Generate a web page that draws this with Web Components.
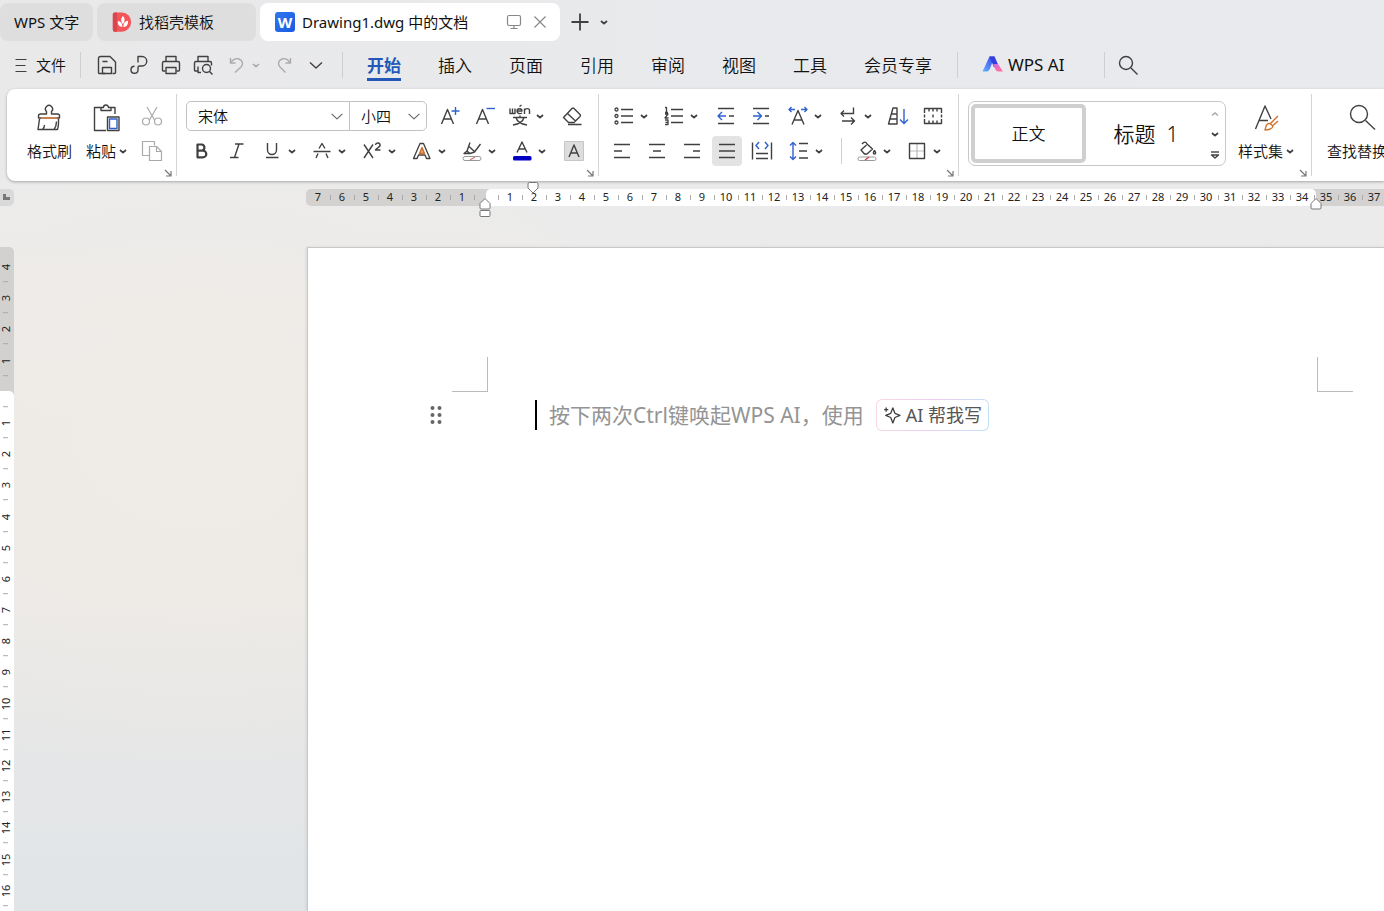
<!DOCTYPE html>
<html lang="zh-CN">
<head>
<meta charset="utf-8">
<title>Drawing1.dwg 中的文档 - WPS 文字</title>
<style>
html, body { margin: 0; height: 100%; overflow: hidden; }
body {
  font-family: "Noto Sans", "Noto Sans CJK SC", sans-serif;
  font-size: 15px;
  line-height: 20px;
  font-weight: 350;
  color: #111;
}
</style>
</head>
<body>
<wps-app></wps-app>
<script>
const caret = '<path d="M9 11l3 2.600 3-2.600" stroke-width="1.800"/>';
const ICONS = {
  menu: '<path d="M6.500 6.500h11M6.500 12.500h10M6.500 18.500h11" stroke-width="1.200"/>',
  caret,
  chevron: '<path d="M6 9.500l6 5.500 6-5.500"/>',
  chevronS: '<path d="M5.500 9.500l6.500 6 6.500-6" stroke="#666"/>',
  save: '<path d="M10 20.500H4.500a1 1 0 0 1-1-1V5.500a2 2 0 0 1 2-2h9.500l5.500 5.500v10.500a1 1 0 0 1-1 1h-2M7.500 8.500h5"/><path d="M7.500 20.500v-6h9v6z"/>',
  share: '<path d="M11 9.500V3.500h4a4.700 4.700 0 0 1 0 9.500h-2.500a1.500 1.500 0 0 0-1.500 1.500v2.500a3.500 3.500 0 1 1-3.500-3.700"/>',
  print: '<path d="M7 8.500v-5h10v5M6.500 18H4.500a1 1 0 0 1-1-1v-7a1.500 1.500 0 0 1 1.500-1.500h14a1.500 1.500 0 0 1 1.500 1.500v7a1 1 0 0 1-1 1h-2"/><path d="M7 14.500h10v6H7z"/>',
  preview: '<path d="M7 8.500v-5h10v5M6.500 18H4.500a1 1 0 0 1-1-1v-7a1.500 1.500 0 0 1 1.500-1.500h14a1.500 1.500 0 0 1 1.500 1.500v2.500M7 13.500v6h3"/><circle cx="15.500" cy="15.500" r="4"/><path d="M18.500 18.500l3 3"/>',
  undo: '<g stroke="#aaa"><path d="M5.500 5v5h5"/><path d="M6 9.500c2-3 5-4.500 8-3.500 4 1.500 4.500 5.500 2 8l-6 5.500"/></g>',
  redo: '<g stroke="#aaa"><path d="M18.500 5v5h-5"/><path d="M18 9.500c-2-3-5-4.500-8-3.500-4 1.500-4.500 5.500-2 8l5.500 5.500"/></g>',
  caretL: '<path d="M9 11l3 2.600 3-2.600" stroke="#aaa" stroke-width="1.600"/>',
  search: '<circle cx="10" cy="10" r="6.500"/><path d="M15 15l6.500 6.500"/>',
  ai: '<g stroke="none"><path d="M8.500 3.500h5L9 15.500c-.9 2-1.800 3-3.500 3H1.500z" fill="url(#b)"/><path d="M8.500 3.500h5l3.500 8-4 3z" fill="#3340e0"/><path d="M12 11h5l5 7.500h-4.500c-1.600 0-2.500-.7-3-2z" fill="url(#r)"/></g><defs><linearGradient id="b" x1="1" y1="0" x2="0" y2="1"><stop stop-color="#3a3ee6"/><stop offset="1" stop-color="#62b4ff"/></linearGradient><linearGradient id="r" x1="0" y1="0" x2="1" y2="1"><stop stop-color="#c06cf0"/><stop offset=".5" stop-color="#f46cb4"/><stop offset="1" stop-color="#ff7896"/></linearGradient></defs>',
  docer: '<path d="M4 1.500h8a10 10.500 0 0 1 0 21H4a2 2 0 0 1-2-2v-17a2 2 0 0 1 2-2z" fill="#f35558" stroke="none"/><path d="M4 1.500h2.500v21H4a2 2 0 0 1-2-2v-17a2 2 0 0 1 2-2z" fill="#d8474d" stroke="none"/><path d="M13 5.500c2.500 2.500 2.500 6 0 9-2.500-3-2.500-6.500 0-9zM7.500 11c3 .2 4.800 2 4.800 6.500-3.800-.5-5.300-3-4.800-6.500zM18.500 10.500c.5 4-1.500 6.500-5 7 0-4.500 1.800-6.800 5-7z" fill="#fff" stroke="none"/>',
  screen: '<g stroke="#888" stroke-width="1.200"><rect x="5.500" y="5.500" width="13" height="10" rx="1.500"/><path d="M12 15.500v3M8.500 18.500h7"/></g>',
  close: '<path d="M6.500 6.500l11 11M17.500 6.500l-11 11" stroke="#888" stroke-width="1.200"/>',
  plus: '<path d="M12 3.500v17M3.500 12h17" stroke-width="1.800"/>',
  cut: '<g stroke="#aaa" stroke-width="1.200"><path d="M7 3l7.500 13M17 3L9.500 16"/><circle cx="6" cy="17.500" r="3.500"/><circle cx="18" cy="17.500" r="3.500"/></g>',
  copy: '<g stroke="#aaa" stroke-width="1.200"><path d="M9 16.500H2.500v-14h12v4"/><path d="M9.500 7.500h7l5 5v9h-12z"/><path d="M16.500 7.500v5h5"/></g>',
  launcher: '<path d="M9 9l5.500 5.500M15 10v5h-5" stroke="#777" stroke-width="1.200"/>',
  grow: '<path d="M3.500 20L9.500 5.500 15.500 20M5.500 15h8"/><path d="M17.500 3v8M13.500 7h8" stroke="#2f62d0"/>',
  shrink: '<path d="M3.500 20L9.500 5.500 15.500 20M5.500 15h8"/><path d="M13.500 4.500h8.500" stroke="#2f62d0"/>',
  pinyin: '<g stroke-width="1.400"><path d="M2 4.500v5h5v-5M4.500 4.500v5M9 7h5c0-3-5-3-5 0 0 3 3.500 3 5 2M11.500 2.500l2-1.500M16.500 10V4.500M16.500 6.500c1-2.500 5-2.500 5 0V10"/><path d="M12 11.500v2M5 13.500h14M8 13.500c1 4 5 6.500 11 7.500M16 13.500c-1 4-5 6.500-11 7.500"/></g>',
  eraser: '<path d="M3.500 13.500l8.500-9a1.500 1.500 0 0 1 2 0l6 6a1.500 1.500 0 0 1 0 2L14 18.500H8.500zM7.500 9.500l8 7.500M8 20.500h13.500"/>',
  bold: '<path d="M7.500 5.500h4.500a3.200 3.200 0 0 1 0 6.200h-4.500zM7.500 11.700h5.500a3.300 3.300 0 0 1 0 6.600h-5.500z" stroke-width="2.200"/>',
  italic: '<path d="M10 5h8.500M5 18.500h8.500M14 5l-4.500 13.500"/>',
  underline: '<path d="M7.500 4v7a4.500 4.500 0 0 0 9 0V4M6 18.500h12.500"/>',
  strike: '<path d="M9 9.500L12 4.500l3 5M3.500 12.500h17M8 14.500l-2 4.500M16 14.500l2 4.500"/>',
  sup: '<path d="M4 5.500L13 19M13 5.500L4 19"/><path d="M15.500 6c.5-3 5-2.500 4.500.5-.3 1.500-3 2.500-4.500 4.500h5" stroke-width="1.500"/>',
  outline: '<path d="M3.500 19.500L10 4.500h3.500l6.500 15h-3.500l-1.500-3.500H8.500L7 19.500z" stroke-width="1.300"/><path d="M9.500 14.500L12 8.500l2.500 6z" stroke="#c96f2c" fill="#e9a46f"/>',
  marker: '<path d="M10 3.500L7 12l3 2.500 4.500-1.500L20.500 5M9 7.500l5.500 5M4 14.500l3-2.500 2.500 2.500z"/><rect x="3" y="17.500" width="18" height="4" rx="2" stroke="#999" stroke-width="1"/><path d="M10 21l5-3" stroke="#d77"/>',
  color: '<path d="M7 13.500L12 3l5 10.500M9 10h6"/><rect x="3" y="17" width="18.500" height="4.500" rx="1.500" fill="#0000c4" stroke="none"/>',
  shade: '<rect x="2.500" y="2.500" width="19" height="19" fill="#ddd" stroke="#c6c6c6" stroke-width="1"/><path d="M7 18L12 6l5 12M8.500 14h7"/>',
  bullets: '<g stroke-width="1.300"><circle cx="4.500" cy="5.500" r="1.500"/><circle cx="4.500" cy="12" r="1.500"/><circle cx="4.500" cy="18.500" r="1.500"/></g><path d="M9 5.500h12M9 12h12M9 18.500h12"/>',
  numbers: '<g stroke-width="1.300"><path d="M3 3.500h1.500v5M3 8.500h3M3 10h3l-3 4h3.500M3 16h3v4.500H3M3.500 18.300H6"/></g><path d="M9 5.500h12M9 12h12M9 18.500h12"/>',
  outdent: '<path d="M4 4.500h16M4 19.500h16M15 12h5"/><path d="M12 12H4.500M8 8l-4 4 4 4" stroke="#2f62d0"/>',
  indent: '<path d="M4 4.500h16M4 19.500h16M16 12h4"/><path d="M4 12h8M8.500 8l4 4-4 4" stroke="#2f62d0"/>',
  scaleA: '<path d="M6 20.500L12 6.500l6 14M8 16h8"/><path d="M9 5.500H3M5.500 3L3 5.500 5.500 8M15 5.500h6M18.500 3L21 5.500 18.500 8" stroke="#2f62d0"/>',
  wrap: '<path d="M17.500 3.500v6H5M8 6.500l-3 3 3 3M6 17h12.500M15 13.500l3.500 3.500-3.500 3.500"/>',
  sort: '<path d="M7 4h4v16H2.500zM6 10h5M4.500 15h6.500"/><path d="M18 5v14M14 15.500l4 4 4-4" stroke="#2f62d0"/>',
  frames: '<path d="M3.500 9V4.500h17V9M3.500 15v4.500h17V15M8 4.500v3M12 4.500v3M16 4.500v3M8 19.500v-3M12 19.500v-3M16 19.500v-3M12 10.500v3M3.500 10.500v3M20.500 10.500v3" stroke-width="1.400"/>',
  left: '<path d="M4 5.500h16M4 12h8M4 18.500h16"/>',
  center: '<path d="M4 5.500h16M8 12h8M4 18.500h16"/>',
  right: '<path d="M4 5.500h16M13 12h7M4 18.500h16"/>',
  justify: '<path d="M4 5.500h16M4 12h16M4 18.500h16"/>',
  distribute: '<path d="M2.500 3.500v17M21.500 3.500v17M6 14.500h12M6 19.500h12"/><path d="M9 3L6 6.500 9 10M15 3l3 3.500-3 3.500" stroke="#2f62d0"/>',
  spacing: '<path d="M12 4.500h9M12 12h8M12 19h9"/><path d="M6 3.500v17M3 6.500l3-3 3 3M3 17.500l3 3 3-3" stroke="#2f62d0"/>',
  fill: '<path d="M7 5c2-2.500 4-2.500 5 0l5.500 5-5.500 5H9.500L6 11l5.500-5M19.500 11.500c-1.500 2-1.500 3.500 0 3.500s1.500-1.500 0-3.500"/><rect x="3" y="18" width="18" height="3.500" rx="1.500" stroke="#999" stroke-width="1"/><path d="M10 21l4-3" stroke="#c44"/>',
  border: '<path d="M12 5v14M5 12h14" stroke="#bbb" stroke-width="1.200"/><path d="M4.500 4.500h15v15h-15z"/>',
  painter: '<path d="M13.500 13V10.500a3.500 3.500 0 1 1 5 0V13h6a2 2 0 0 1 2 2v2H5.500v-2a2 2 0 0 1 2-2z"/><path d="M6.500 18L5 28.500h16c2-2.500 2.500-5.500 2.500-8M25.500 18v4c0 3-.5 5-1 6.500H21M9.500 28.500c1.500-1.500 2-3 2-4.500"/><path d="M8 17h16" stroke="#ec8a4a"/>',
  paste: '<path d="M12 6.500H5.500v23H17M22 6.500h4V13M12 6.500v3h10v-3h-2.500a2.500 2.500 0 0 0-5 0z"/><path d="M18.500 16h11.500v13.500H18.500z"/><path d="M20.500 18h7.500v9.500h-7.500z" stroke="#2f62d0"/>',
  styleSet: '<path d="M6.500 28L16 5l6 13M10 19.500h9"/><g stroke="#d0722e"><path d="M29 15l-8 8M29 20l-5 4.500"/><path d="M21 22.500c-3.500-.5-4 2-5 6.500 4 0 7.500-1 8-4z"/></g>',
  find: '<circle cx="14" cy="13" r="8.500"/><path d="M20.500 19.500l9.500 9"/>',
  spark: '<path d="M13 3.500l2.500 6.500 6 2.500-6 2.500-2.500 6.500-2.500-6.500-6-2.500 6-2.500zM5 3v5M2.500 5.500h5" stroke-width="1.600"/>',
  grip: '<g fill="#666" stroke="none"><circle cx="8.500" cy="5" r="2"/><circle cx="15.500" cy="5" r="2"/><circle cx="8.500" cy="12" r="2"/><circle cx="15.500" cy="12" r="2"/><circle cx="8.500" cy="19" r="2"/><circle cx="15.500" cy="19" r="2"/></g>',
  more: '<path d="M8 10h8"/><path d="M8.500 13l3.500 3 3.500-3z"/>',
  up: '<path d="M9 13.500l3-2.600 3 2.600" stroke="#aaa"/>'
};
const BIG = new Set(['painter', 'paste', 'styleSet', 'find']);
const BASE = '*{box-sizing:border-box}button{font:inherit;color:inherit;background:none;border:0;padding:0;margin:0;cursor:default;display:flex;align-items:center;justify-content:center;white-space:nowrap}';

function define(name, render) {
  customElements.define(name, class extends HTMLElement {
    connectedCallback() {
      if (this.shadowRoot) return;
      const t = document.createElement('template');
      t.innerHTML = '<style>' + BASE + '</style>' + render(this);
      this.attachShadow({ mode: 'open' }).append(t.content.cloneNode(true));
    }
  });
}

define('wps-icon', el => {
  const name = el.getAttribute('name');
  const box = BIG.has(name) ? 34 : 24;
  return `<style>:host{display:block;flex:none;width:var(--icon,${box}px);height:var(--icon,${box}px)}svg{display:block;width:100%;height:100%}</style>
  <svg viewBox="0 0 ${box} ${box}" fill="none" stroke="#404040" stroke-width="1.400" stroke-linejoin="round" aria-hidden="true">${ICONS[name]}</svg>`;
});

define('wps-sep', () => '<style>:host{display:block;flex:none;width:1px;height:26px;background:#cfcfd1}</style>');

/* Ribbon tool: an icon, with a drop-down arrow when "menu" is set */
define('wps-tool', el => {
  const menu = el.hasAttribute('menu');
  return `<style>
  :host{display:flex;flex:none;width:${menu ? 50 : 35}px;height:35px;align-items:center;justify-content:${menu ? 'flex-start' : 'center'}}
  button{height:30px;border-radius:4px;${menu ? 'width:50px;justify-content:flex-start;padding-left:6px' : 'width:30px'}}
  :host([pressed]) button{background:#e3e3e3}
  .c{margin-left:-4px}
  </style><button type="button" aria-label="${el.getAttribute('label')}"${el.hasAttribute('pressed') ? ' aria-pressed="true"' : ''}><wps-icon name="${el.getAttribute('icon')}"></wps-icon>${menu ? '<wps-icon class="c" name="caret"></wps-icon>' : ''}</button>`;
});

/* Tall tool with a caption under its icon */
define('wps-big-tool', el => `<style>
  :host{display:block;flex:none}
  button{flex-direction:column;height:70px;justify-content:flex-start;padding-top:3px;gap:4px}
  span{display:flex;height:24px;align-items:center}
  .c{margin-right:-9px;margin-left:-5px}
  </style><button type="button"><wps-icon name="${el.getAttribute('icon')}"></wps-icon><span><slot></slot>${el.hasAttribute('menu') ? '<wps-icon class="c" name="caret"></wps-icon>' : ''}</span></button>`);

define('wps-group', el => `<style>
  :host{display:flex;flex:none;position:relative;height:82px;margin-top:5px;padding-top:4px;border-right:1px solid #d4d4d4}
  :host([last]){border:0}
  button{position:absolute;right:2px;bottom:-3px;width:12px;height:12px}
  </style><slot></slot>${el.hasAttribute('last') ? '' : '<button type="button" aria-label="更多设置"><wps-icon name="launcher"></wps-icon></button>'}`);

define('wps-combo', el => `<style>
  :host{display:grid;height:30px;align-items:center;border:1px solid #c2c2c2}
  select,wps-icon{grid-area:1/1}
  select{appearance:none;border:0;background:none;font:inherit;color:inherit;height:28px;padding:0 24px 0 11px;width:100%}
  wps-icon{justify-self:end;pointer-events:none;--icon:20px;margin-right:2px}
  </style><select aria-label="${el.getAttribute('label')}"><option>${el.getAttribute('value')}</option></select><wps-icon name="chevronS"></wps-icon>`);

define('wps-tab', () => `<style>
  :host{display:flex;flex:none;height:38px;align-items:center;border-radius:8px;background:#dededf}
  :host([active]){background:#fff}
  </style><slot></slot>`);

define('wps-tabbar', () => `<style>
  :host{display:flex;height:44px;padding-top:3px;gap:4px}
  .home{width:93px;padding-left:14px;font-weight:400}
  .store{width:159px;padding-left:14px;gap:6px;--icon:22px}
  .doc{width:300px;padding-left:15px;font-weight:400}
  .logo{width:20px;height:20px;margin-right:7px;border-radius:3px;background:linear-gradient(135deg,#2f76f0,#1a5be0);color:#fff;font:700 15px/20px "Open Sans","Noto Sans",sans-serif;text-align:center}
  .name{flex:1}
  .close{margin:0 8px 0 2px}
  .add{display:flex;height:38px}
  .add button{width:24px;height:38px}
  .add .new{width:32px}
  .add .list{margin-left:-4px}
  </style>
  <wps-tab class="home"><button type="button">WPS 文字</button></wps-tab>
  <wps-tab class="store"><wps-icon name="docer"></wps-icon><button type="button">找稻壳模板</button></wps-tab>
  <wps-tab class="doc" active><span class="logo">W</span><span class="name">Drawing1.dwg 中的文档</span>
    <button type="button" aria-label="窗口"><wps-icon name="screen"></wps-icon></button>
    <button type="button" class="close" aria-label="关闭"><wps-icon name="close"></wps-icon></button></wps-tab>
  <div class="add"><button type="button" class="new" aria-label="新建"><wps-icon name="plus"></wps-icon></button><button type="button" class="list" aria-label="标签列表"><wps-icon name="caret"></wps-icon></button></div>`);

define('wps-menubar', () => `<style>
  :host{display:flex;height:45px;align-items:center;padding-bottom:3px}
  .file{padding-left:9px;gap:3px;margin-right:14px}
  .quick{display:flex;align-items:center;padding-left:10px}
  .quick button{width:32px;height:32px}
  .quick .undo{margin-left:2px}
  .quick .drop{width:12px;margin:0 8px 0 -3px}
  .quick .redo{margin-left:-2px}
  .quick .all{margin-right:10px}
  nav{display:flex;gap:37px;margin:0 25px 0 24px;font-size:17px;line-height:24px}
  nav button{padding:5px 0 0;border-bottom:3px solid transparent}
  nav .on{color:#2458b8;font-weight:700;border-color:#2458b8}
  .ai{font-size:17px;font-weight:400;margin:0 39px 0 23px;gap:3px}
  .find{margin-left:11px}
  </style>
  <button type="button" class="file"><wps-icon name="menu"></wps-icon>文件</button><wps-sep></wps-sep>
  <div class="quick">
    <button type="button" aria-label="保存"><wps-icon name="save"></wps-icon></button>
    <button type="button" aria-label="输出为PDF"><wps-icon name="share"></wps-icon></button>
    <button type="button" aria-label="打印"><wps-icon name="print"></wps-icon></button>
    <button type="button" aria-label="打印预览"><wps-icon name="preview"></wps-icon></button>
    <button type="button" class="undo" aria-label="撤销"><wps-icon name="undo"></wps-icon></button>
    <button type="button" class="drop" aria-label="撤销列表"><wps-icon name="caretL"></wps-icon></button>
    <button type="button" class="redo" aria-label="恢复"><wps-icon name="redo"></wps-icon></button>
    <button type="button" class="all" aria-label="自定义"><wps-icon name="chevron"></wps-icon></button>
  </div><wps-sep></wps-sep>
  <nav><button type="button" class="on">开始</button><button type="button">插入</button><button type="button">页面</button><button type="button">引用</button><button type="button">审阅</button><button type="button">视图</button><button type="button">工具</button><button type="button">会员专享</button></nav>
  <wps-sep></wps-sep>
  <button type="button" class="ai"><wps-icon name="ai"></wps-icon>WPS AI</button><wps-sep></wps-sep>
  <button type="button" class="find" aria-label="搜索"><wps-icon name="search"></wps-icon></button>`);

define('wps-ribbon', () => `<style>
  :host{display:flex;height:92px;margin-left:7px;background:#fff;border-radius:8px 0 0 8px;box-shadow:0 1px 3px rgba(0,0,0,.3);position:relative}
  .rows{display:flex;flex-direction:column}
  .row{display:flex;height:35px;align-items:center}
  .clip{width:170px;padding-left:20px}
  .clip .paste{margin-left:14px}
  .clip .rows{margin-left:8px}
  .font{width:422px;padding-left:7px}
  .combos{display:flex;margin:0 5px 0 2px}
  .face{width:164px;border-radius:5px 0 0 5px}
  .size{width:78px;border-radius:0 5px 5px 0;margin-left:-1px}
  .para{width:360px;padding-left:5px}
  .gap{margin-left:2px}
  wps-sep.in{margin:0 7px 0 10px}
  .styles{width:353px;padding-left:9px}
  .gallery{display:flex;width:258px;height:65px;margin-top:3px;padding:2px 0 2px 2px;border:1px solid #c8c8c8;border-radius:7px}
  .gallery button{flex:none;height:59px;font-size:17px;line-height:24px}
  .gallery .body{width:115px;border:4px solid #cfcfcf;border-radius:5px}
  .gallery .head{width:120px;font-size:21px;white-space:pre}
  .arrows{display:flex;flex-direction:column}
  .arrows button{width:18px;height:20px}
  .set{margin-left:12px}
  .find{padding-left:15px}
  </style>
  <wps-group class="clip">
    <wps-big-tool icon="painter">格式刷</wps-big-tool><wps-big-tool class="paste" icon="paste" menu>粘贴</wps-big-tool>
    <div class="rows"><wps-tool icon="cut" label="剪切"></wps-tool><wps-tool icon="copy" label="复制"></wps-tool></div>
  </wps-group>
  <wps-group class="font"><div class="rows">
    <div class="row"><div class="combos"><wps-combo class="face" label="字体" value="宋体"></wps-combo><wps-combo class="size" label="字号" value="小四"></wps-combo></div>
      <wps-tool icon="grow" label="增大字号"></wps-tool><wps-tool icon="shrink" label="减小字号"></wps-tool><wps-tool icon="pinyin" label="拼音指南" menu></wps-tool><wps-tool class="gap" icon="eraser" label="清除格式"></wps-tool></div>
    <div class="row"><wps-tool icon="bold" label="加粗"></wps-tool><wps-tool icon="italic" label="倾斜"></wps-tool><wps-tool icon="underline" label="下划线" menu></wps-tool><wps-tool icon="strike" label="删除线" menu></wps-tool><wps-tool icon="sup" label="上标" menu></wps-tool><wps-tool icon="outline" label="文字效果" menu></wps-tool><wps-tool icon="marker" label="突出显示" menu></wps-tool><wps-tool icon="color" label="字体颜色" menu></wps-tool><wps-tool class="gap" icon="shade" label="字符底纹"></wps-tool></div>
  </div></wps-group>
  <wps-group class="para"><div class="rows">
    <div class="row"><wps-tool class="gap" icon="bullets" label="项目符号" menu></wps-tool><wps-tool icon="numbers" label="编号" menu></wps-tool><wps-tool class="gap" icon="outdent" label="减少缩进量"></wps-tool><wps-tool icon="indent" label="增加缩进量"></wps-tool><wps-tool class="gap" icon="scaleA" label="中文版式" menu></wps-tool><wps-tool icon="wrap" label="换行" menu></wps-tool><wps-tool icon="sort" label="排序"></wps-tool><wps-tool icon="frames" label="制表位"></wps-tool></div>
    <div class="row"><wps-tool icon="left" label="左对齐"></wps-tool><wps-tool icon="center" label="居中对齐"></wps-tool><wps-tool icon="right" label="右对齐"></wps-tool><wps-tool icon="justify" label="两端对齐" pressed></wps-tool><wps-tool icon="distribute" label="分散对齐"></wps-tool><wps-tool class="gap" icon="spacing" label="行距" menu></wps-tool><wps-sep class="in"></wps-sep><wps-tool icon="fill" label="底纹颜色" menu></wps-tool><wps-tool icon="border" label="边框" menu></wps-tool></div>
  </div></wps-group>
  <wps-group class="styles">
    <div class="gallery"><button type="button" class="body">正文</button><button type="button" class="head">标题  1</button>
      <div class="arrows"><button type="button" aria-label="上一行"><wps-icon name="up"></wps-icon></button><button type="button" aria-label="下一行"><wps-icon name="caret"></wps-icon></button><button type="button" aria-label="展开"><wps-icon name="more"></wps-icon></button></div></div>
    <wps-big-tool class="set" icon="styleSet" menu>样式集</wps-big-tool>
  </wps-group>
  <wps-group class="find" last><wps-big-tool icon="find" menu>查找替换</wps-big-tool></wps-group>`);

const cells = list => list.map(n => `<span>${n || ''}</span>`).join('');
const seq = (a, b) => Array.from({ length: Math.abs(b - a) + 1 }, (_, i) => a + i * Math.sign(b - a));

define('wps-hruler', () => `<style>
  :host{display:flex;height:32px;padding-top:8px;font:11px/15px "Noto Sans",sans-serif;color:#222}
  .corner{width:14px;height:17px;border-radius:0 5px 5px 0;background:#d9d9d9;padding:5px 0 0 3px}
  .corner i{display:block;width:7px;height:6px;border-left:3px solid #777;border-bottom:3px solid #777}
  .ruler{position:relative;display:grid;flex:1;min-width:0;height:17px;margin-left:292px}
  .bands,.nums{grid-area:1/1;display:flex;min-width:0}
  .bands{background:#d3d2d1;border-radius:5px 0 0 5px}
  .bands i{margin-left:180px;width:var(--column);background:#fff;border-radius:5px}
  .nums{overflow:hidden}
  .nums span{flex:none;width:24px;text-align:center;background:linear-gradient(#aaa,#aaa) 0 6px/1px 5px no-repeat}
  .nums span:first-child{background:none}
  svg{position:absolute;overflow:visible}
  </style>
  <div class="corner"><i></i></div>
  <div class="ruler"><div class="bands"><i></i></div><div class="nums">${cells([...seq(7, 1), 0, ...seq(1, 37)])}</div>
    <svg style="left:221px;top:-7px" width="12" height="12" fill="#fff" stroke="#777"><path d="M2.500.5h7a1.500 1.500 0 0 1 1.500 1.500v4L6 11 1 6V2A1.500 1.500 0 0 1 2.500.5z"/></svg>
    <svg style="left:173px;top:9px" width="12" height="20" fill="#fff" stroke="#777"><path d="M6 .5l5 5v4.500a1 1 0 0 1-1 1H2a1 1 0 0 1-1-1V5.500zM2 12.500h8a1 1 0 0 1 1 1v4a1 1 0 0 1-1 1H2a1 1 0 0 1-1-1v-4a1 1 0 0 1 1-1z"/></svg>
    <svg style="left:1004px;top:9px" width="12" height="12" fill="#fff" stroke="#777"><path d="M6 .5l5 5v4.500a1 1 0 0 1-1 1H2a1 1 0 0 1-1-1V5.500z"/></svg>
  </div>`);

define('wps-vruler', () => `<style>
  :host{display:grid;width:14px;font:11px/12px "Noto Sans",sans-serif;color:#222}
  .bands,.nums{grid-area:1/1;display:flex;flex-direction:column;min-height:0}
  .bands{background:#d3d1cf;border-radius:0 5px 0 0;padding-top:144px}
  .bands i{flex:1;background:#fff;border-radius:0 5px 0 0}
  .nums{padding:4px 0 5px}
  .nums span{flex:1;width:12px;display:flex;align-items:center;justify-content:center;writing-mode:vertical-rl;transform:rotate(180deg);background:linear-gradient(#aaa,#aaa) 4px 0/5px 1px no-repeat}
  </style><div class="bands"><i></i></div><div class="nums">${cells([...seq(4, 1), 0, ...seq(1, 16)])}</div>`);

define('wps-page', () => `<style>
  :host{display:block;flex:1;min-width:0;background:#fff;border:solid #c6c6c6;border-width:1px 0 0 1px;padding:109px 0 0 144px;overflow:hidden;box-shadow:-1px 0 3px rgba(0,0,0,.08)}
  .marks{display:flex}
  .marks i{flex:none;width:36px;height:35px;border-bottom:1px solid #bbb}
  .marks i:first-child{border-right:1px solid #bbb;margin-right:calc(var(--column) - 1px)}
  .marks i:last-child{border-left:1px solid #bbb}
  .line{display:flex;align-items:center;height:32px;margin-top:7px;margin-left:-28px;color:#949494;font-size:21px;font-weight:400;line-height:32px;white-space:nowrap}
  .caret{width:2px;height:30px;background:#000;margin:0 12px 0 87px}
  .chip{height:32px;margin-left:12px;padding:0 6px 0 5px;gap:4px;border:1px solid transparent;border-radius:6px;font-size:18px;color:#555;background:linear-gradient(#fff,#fff) padding-box,linear-gradient(100deg,#fbd9e0,#eecdf3 50%,#bfe3f8) border-box;--icon:20px}
  </style>
  <div class="marks"><i></i><i></i></div>
  <div class="line"><button type="button" aria-label="段落"><wps-icon name="grip"></wps-icon></button><span class="caret"></span><span>按下两次Ctrl键唤起WPS AI，使用</span><button type="button" class="chip"><wps-icon name="spark"></wps-icon>AI 帮我写</button></div>`);

define('wps-app', () => `<style>
  :host{--column:830px;display:flex;flex-direction:column;height:100vh;background:radial-gradient(ellipse 480px 340px at 200px 440px,#efebe6,rgba(239,235,230,0)),linear-gradient(90deg,#e9e9ea,#e8eaee) 0 0/100% 180px no-repeat,linear-gradient(#ebebec 180px,#edebea 300px,#ebe9e7 600px,#e2e5e7 860px)}
  main{display:flex;flex:1;min-height:0;margin-top:34px}
  wps-page{margin-left:293px}
  </style>
  <wps-tabbar></wps-tabbar><wps-menubar></wps-menubar><wps-ribbon></wps-ribbon><wps-hruler></wps-hruler>
  <main><wps-vruler></wps-vruler><wps-page></wps-page></main>`);
</script>
</body>
</html>
